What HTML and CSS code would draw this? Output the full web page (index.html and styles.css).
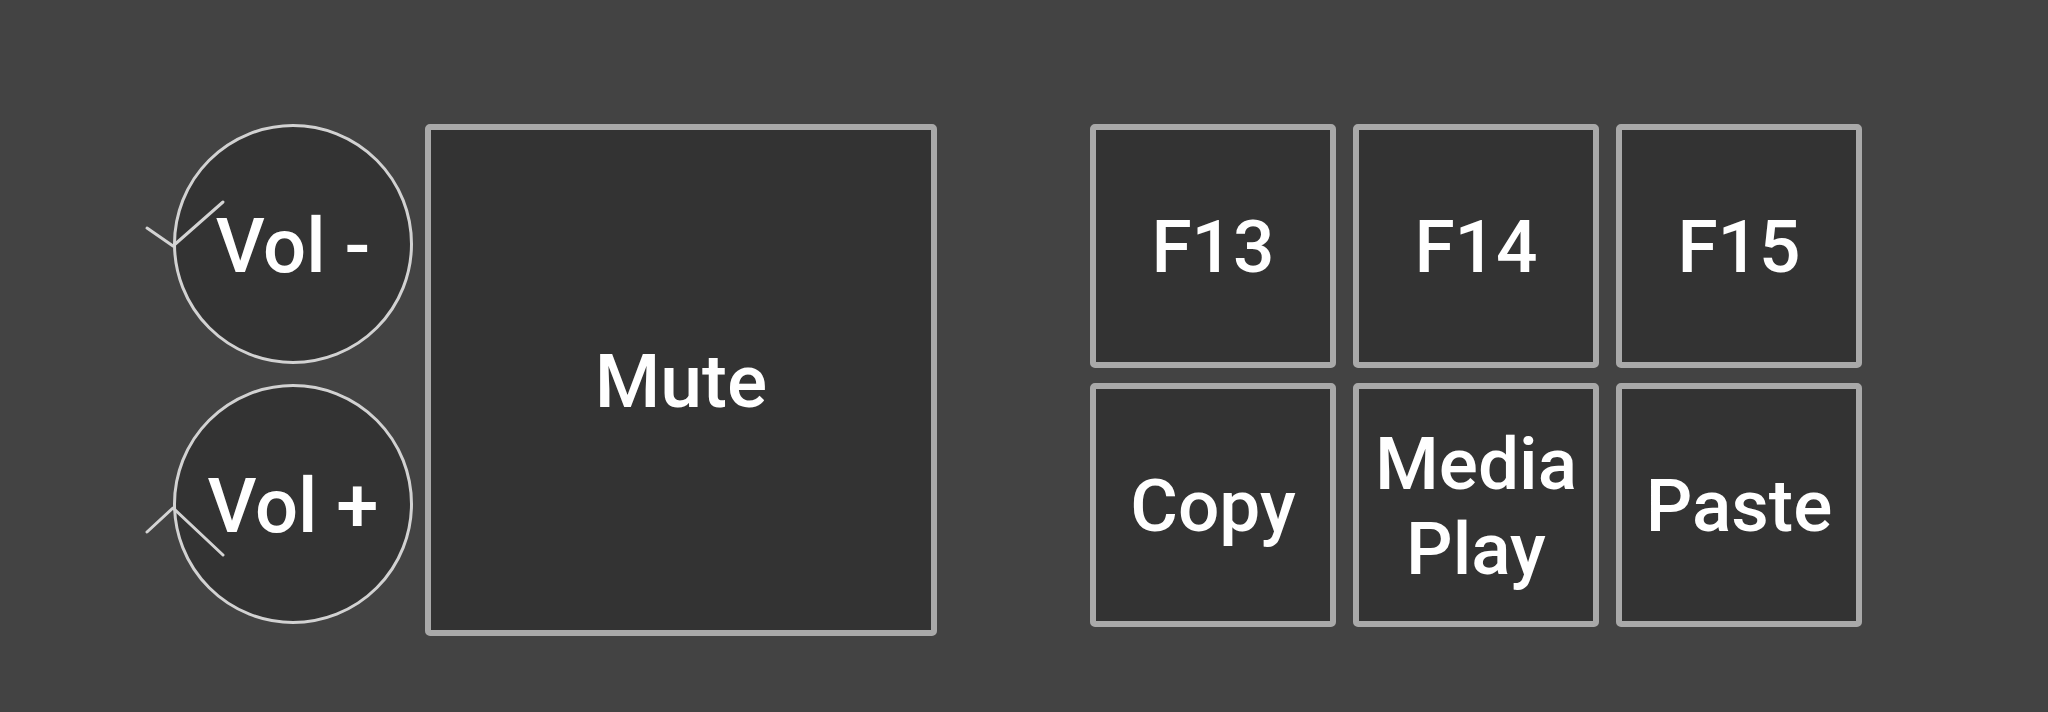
FILE: index.html
```html
<!DOCTYPE html>
<html>
<head>
<meta charset="utf-8">
<link rel="stylesheet" href="styles.css">
</head>
<body>
<div class="board">
  <div class="encoders">
    <div class="enc">
      <svg class="arrow" width="90" height="100" viewBox="-35 60 90 100">
        <polyline points="-26,103 0,121 50,77" fill="none" stroke="#d4d4d4" stroke-width="3" stroke-linecap="round" stroke-linejoin="round"/>
      </svg>
      <span class="label">Vol -</span>
    </div>
    <div class="enc">
      <svg class="arrow" width="90" height="100" viewBox="-35 80 90 100">
        <polyline points="-26,149 0,125 50,172" fill="none" stroke="#d4d4d4" stroke-width="3" stroke-linecap="round" stroke-linejoin="round"/>
      </svg>
      <span class="label">Vol +</span>
    </div>
  </div>
  <div class="key big"><span class="label">Mute</span></div>
  <div class="grid">
    <div class="key"><span class="label">F13</span></div>
    <div class="key"><span class="label">F14</span></div>
    <div class="key"><span class="label">F15</span></div>
    <div class="key"><span class="label">Copy</span></div>
    <div class="key"><span class="label">Media<br>Play</span></div>
    <div class="key"><span class="label">Paste</span></div>
  </div>
</div>
</body>
</html>
```
FILE: styles.css
```css
html, body {
  margin: 0;
  padding: 0;
  background: #434343;
  width: 2048px;
  height: 712px;
  overflow: hidden;
}
.board {
  display: flex;
  align-items: flex-start;
  padding: 124px 0 0 173px;
  font-family: Roboto, "Liberation Sans", Arial, sans-serif;
  font-weight: 500;
  color: #ffffff;
}
.encoders {
  display: flex;
  flex-direction: column;
  gap: 20px;
}
.enc {
  position: relative;
  box-sizing: border-box;
  width: 240px;
  height: 240px;
  border-radius: 50%;
  border: 3px solid #d2d2d2;
  background: #333333;
  display: flex;
  align-items: center;
  justify-content: center;
}
.enc .arrow {
  position: absolute;
  left: -38px;
  top: 58px;
  overflow: visible;
}
.enc:nth-child(2) .arrow {
  top: 76px;
}
.label {
  font-size: 75px;
  line-height: 1.17;
  text-align: center;
  position: relative;
  top: 2px;
}
.enc .label {
  font-size: 76px;
}
.key {
  box-sizing: border-box;
  border: 6px solid #a9a9a9;
  border-radius: 5px;
  background: #333333;
  display: flex;
  align-items: center;
  justify-content: center;
}
.big {
  width: 512px;
  height: 512px;
  margin: 0 0 0 12px;
}
.grid {
  display: grid;
  grid-template-columns: repeat(3, 246px);
  grid-template-rows: repeat(2, 244px);
  column-gap: 17px;
  row-gap: 15px;
  margin: 0 0 0 153px;
}
.grid .label {
  font-size: 73px;
}
```
